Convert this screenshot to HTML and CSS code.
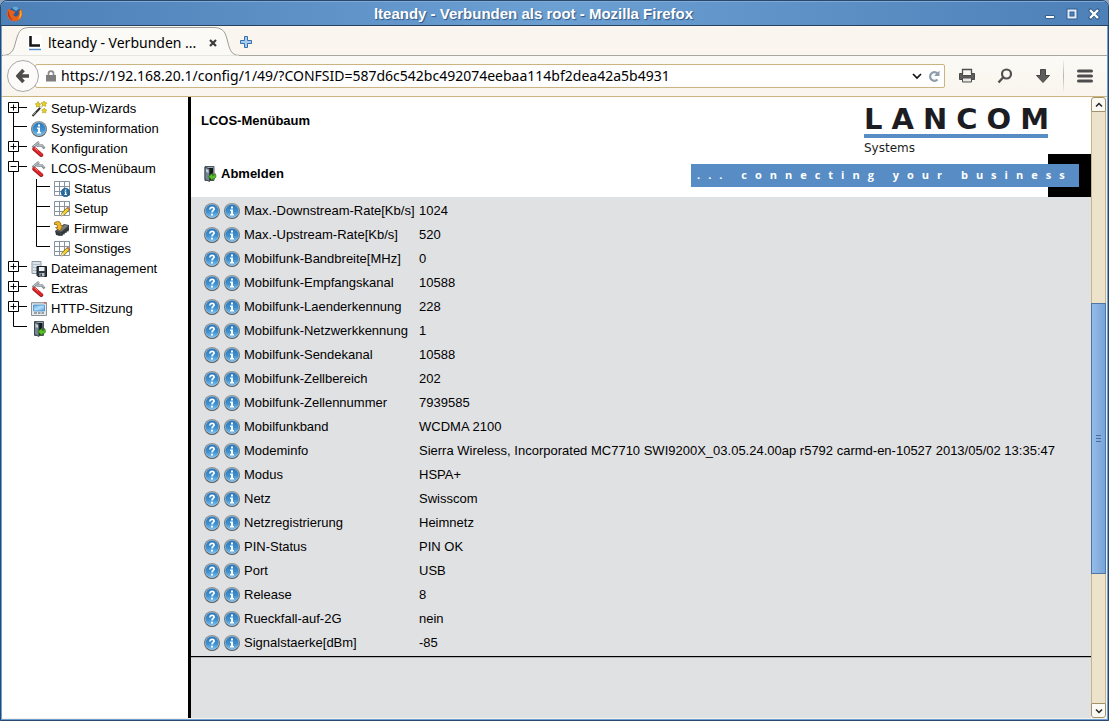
FILE: index.html
```
<!DOCTYPE html>
<html lang="de">
<head>
<meta charset="utf-8">
<title>lteandy - Verbunden als root</title>
<link rel="stylesheet" href="styles.css">
</head>
<body>
<svg class="defs" aria-hidden="true">
  <defs>
    <linearGradient id="blue" x1="0" y1="0" x2="0" y2="1"><stop offset="0" stop-color="#2f78b8"/><stop offset="0.55" stop-color="#3d8fd0"/><stop offset="1" stop-color="#7cc4ee"/></linearGradient>
    <linearGradient id="ring" x1="0" y1="0" x2="0" y2="1"><stop offset="0" stop-color="#8b979f"/><stop offset="1" stop-color="#4b545a"/></linearGradient>
    <linearGradient id="screen" x1="0" y1="0" x2="1" y2="1"><stop offset="0" stop-color="#4fa8e8"/><stop offset="0.5" stop-color="#b4defa"/><stop offset="1" stop-color="#4fa0e0"/></linearGradient>
    <symbol id="orb" viewBox="0 0 16 16"><circle cx="8" cy="8" r="8" fill="url(#ring)"/><circle cx="8" cy="8" r="7" fill="#a9bcc8"/><circle cx="8" cy="8" r="6.500" fill="url(#blue)"/></symbol>
    <symbol id="info" viewBox="0 0 16 16"><use href="#orb"/><path d="M7 3.500h2v2H7zM6 6.500h3v4.500h1v1.500H6V11h1V8H6z" fill="#fff"/></symbol>
    <symbol id="help" viewBox="0 0 16 16"><use href="#orb"/><path d="M6 6.500C5.800 3.700 10.300 3.700 10.100 6C10 7.300 8.100 7.500 8 9.500" fill="none" stroke="#fff" stroke-width="1.700"/><path d="M7 10.700h2v1.800H7z" fill="#fff"/></symbol>
    <symbol id="wand" viewBox="0 0 16 16"><path d="M1.500 15L10 6" stroke="#333" stroke-width="2"/><path d="M2 14L5 11" stroke="#8c9499" stroke-width="1"/><path d="M9 7l2-2" stroke="#ddd" stroke-width="2"/><g fill="#e9d31d" stroke="#a8951a" stroke-width=".6"><path d="M7 .5l1 2 1.800.4-1.300 1.300.2 2-1.700-.9-1.700.9.2-2L4.200 2.900 6 2.500z"/><path d="M13 0l1 1.600 1.800.3-1.200 1.500.2 1.900-1.800-.8-1.700.8.1-1.900-1.200-1.500 1.800-.3z"/><path d="M13.300 7l.9 1.500 1.600.5-1.100 1.200.1 1.800-1.500-.7-1.600.7.1-1.800-1.100-1.200 1.600-.5z"/></g></symbol>
    <symbol id="knife" viewBox="0 0 16 16"><path d="M1.500 6.500L8 1M5.500 4.500H11L13.500 7.500" fill="none" stroke="#7d868e" stroke-width="2.600"/><path d="M2.500 5.300L8 1M5.500 4.200H11L13 6.500" fill="none" stroke="#cdd3d8" stroke-width="1"/><path d="M3.300 8L10.200 14" stroke="#9a1a1d" stroke-width="4" stroke-linecap="round"/><path d="M3.300 7.500L10.200 13.500" stroke="#e0282d" stroke-width="2.800" stroke-linecap="round"/><path d="M3.800 7L6.800 9.700" stroke="#f79a8f" stroke-width=".9"/></symbol>
    <symbol id="grid" viewBox="0 0 16 16"><path d="M.5.500h15v14H.5z" fill="#fff" stroke="#8693a0"/><path d="M5.500 1v13M10.500 1v13M1 5.500h14M1 10.500h14" stroke="#8693a0"/></symbol>
    <symbol id="gridinfo" viewBox="0 0 16 16"><use href="#grid"/><circle cx="11.500" cy="11.500" r="4.300" fill="#246ba1" stroke="#134a75" stroke-width=".6"/><path d="M10.900 8.500h1.400v1.200h-1.400zM10.400 10.500h1.900v2.600h.6v.8h-2.500v-.8h.6v-1.800h-.6z" fill="#fff"/></symbol>
    <symbol id="gridedit" viewBox="0 0 16 16"><use href="#grid"/><path d="M7 15l1-3.300 5.300-5.200 2.300 2.200-5.400 5.300z" fill="#f0d32b" stroke="#6d5a14" stroke-width=".8"/><path d="M7 15l1-3.300 2.300 2.300z" fill="#f2dbbd"/><path d="M12.700 7l1-.9c.8-.8 2.900 1.300 2 2l-.8.9z" fill="#cf6d55"/></symbol>
    <symbol id="chip" viewBox="0 0 16 16"><path d="M1 10l9-7 5 1v5l-8 6-5-1z" fill="#41464b"/><path d="M3 9.500L10.500 4l4 .7L7 10.500z" fill="#777e84"/><path d="M3 11v3M5 12v3M8 11v4M10 10v3.500M12 8v4M14 6.500v4" stroke="#24282b"/><path d="M.5 1.500l3-1c3 0 3.500 2 3.300 4h2L6 10 1.500 6.500h2C3.500 4 3 3 .5 3.500z" fill="#f1b821" stroke="#7a570b" stroke-width=".7"/></symbol>
    <symbol id="files" viewBox="0 0 16 16"><path d="M1 .5h9v12H1z" fill="#dbe3ea" stroke="#8b97a1"/><path d="M1 3.500h9M1 6.500h9M1 9.500h5" stroke="#b2bec8"/><path d="M6 5.500h9.500v10H7L6 14.500z" fill="#303a43" stroke="#151b20"/><path d="M8 6h5.500v4H8z" fill="#eef2f5"/><path d="M8.500 12h5v3.500h-5z" fill="#bac3ca"/><path d="M9.500 12.500h1.300v2.500H9.500z" fill="#222"/></symbol>
    <symbol id="session" viewBox="0 0 16 16"><path d="M.5 1.500h15v13H.5z" fill="#e7ebee" stroke="#8b9197"/><path d="M1 2h14" stroke="#aab1b7"/><path d="M13 2h2" stroke="#d8442b"/><path d="M2.500 4h11v6h-11z" fill="url(#screen)" stroke="#4b8ec4" stroke-width=".8"/><path d="M3 12h3M7 12h2.500M10.500 12H13" stroke="#7d868d" stroke-width="1.500"/></symbol>
    <symbol id="door" viewBox="0 0 16 16"><path d="M3.500.5h9v14h-9z" fill="#9ba8b2" stroke="#4c565e"/><path d="M6 2h5.500v12H6z" fill="#15191c"/><path d="M3.500 1L8 3v12.500l-4.500-2z" fill="#738492" stroke="#333d45" stroke-width=".8"/><path d="M4.500 3l2.500 1v3l-2.500-1z" fill="#c0ced8"/><path d="M7 10.500l4-3.500v2.200c2.500.3 2.500-.7 2.500-1.700 2 3 .5 5.500-2.500 5.500V15z" fill="#58bf26" stroke="#256c0b" stroke-width=".7"/></symbol>
    <symbol id="plus" viewBox="0 0 23 20"><path d="M5.500 0v20M10 7.500h9" stroke="#000"/><path d="M.5 2.500h10v10H.5z" fill="#fff" stroke="#000"/><path d="M2.500 7.500h6M5.500 4.500v6" stroke="#000"/></symbol>
    <symbol id="plusfirst" viewBox="0 0 23 20"><path d="M5.500 8v12M10 8.500h9" stroke="#000"/><path d="M.5 3.500h10v10H.5z" fill="#fff" stroke="#000"/><path d="M2.500 8.500h6M5.500 5.500v6" stroke="#000"/></symbol>
    <symbol id="minus" viewBox="0 0 23 20"><path d="M5.500 0v20M10 7.500h9" stroke="#000"/><path d="M.5 2.500h10v10H.5z" fill="#fff" stroke="#000"/><path d="M2.500 7.500h6" stroke="#000"/></symbol>
    <symbol id="branch" viewBox="0 0 23 20"><path d="M5.500 0v20M5 7.500h14" stroke="#000"/></symbol>
    <symbol id="last" viewBox="0 0 23 20"><path d="M5.500 0v7.500h13.500" fill="none" stroke="#000"/></symbol>
    <symbol id="subbranch" viewBox="0 0 18 20"><path d="M.5 0v20M0 7.500h14" stroke="#000"/></symbol>
    <symbol id="sublast" viewBox="0 0 18 20"><path d="M.5 0v7.500h13.500" fill="none" stroke="#000"/></symbol>
  </defs>
</svg>

<div class="window">
  <header class="titlebar">
    <svg class="fox" viewBox="0 0 16 16"><circle cx="8" cy="7.500" r="6.500" fill="#285d9c"/><path d="M5 2c2-2 5-1.500 7 .5L9 5z" fill="#62abd9"/><path d="M1.500 2.500L3.500 4 6 4.500 8.500 6 7 7.500 6.500 9.500c2 2 4.500 1 5.500-1.500L11.500 4 13 5l.5-2.500c3 4 2 9-1.500 11.500s-9 1.500-11-2.500-.5-6 .5-9z" fill="#e5601c"/><path d="M13.500 3.500c2 4 1 8-2.500 10 1.500-2 2.500-5 2.500-10z" fill="#fac02e"/><path d="M1.500 4.500C0 9 2 13 6 14.500 3 12 2 9 1.500 4.500z" fill="#b52c18"/></svg>
    <h1 class="window-title">lteandy - Verbunden als root - Mozilla Firefox</h1>
    <div class="window-controls">
      <button aria-label="Minimieren"><svg viewBox="0 0 12 12"><path d="M1.500 7.500h9v3h-9z" fill="#fff" stroke="#355f8f"/></svg></button>
      <button aria-label="Maximieren"><svg viewBox="0 0 12 12"><path d="M2.500 2.500h7v7h-7z" fill="none" stroke="#355f8f" stroke-width="4"/><path d="M2.500 2.500h7v7h-7z" fill="none" stroke="#e4edf7" stroke-width="2"/></svg></button>
      <button aria-label="Schließen"><svg viewBox="0 0 12 12"><path d="M2.500 2.500l7 7M9.500 2.500l-7 7" stroke="#355f8f" stroke-width="4" stroke-linecap="square"/><path d="M2 2l8 8M10 2l-8 8" stroke="#fff" stroke-width="2.300"/></svg></button>
    </div>
  </header>

  <div class="tabs">
    <div class="tab">
      <svg class="tab-shape" viewBox="0 0 238 30"><path d="M0 29.500C12 29.500 12 21 14.500 13C17 4 20 1.500 28 1.500H211C220 1.500 223 5 225 13C227.500 22 228 29.500 238 29.500" fill="#fbfaf6" stroke="#9c9c98"/><path d="M1 30h236" stroke="#fbfaf6" stroke-width="1"/></svg>
      <svg class="favicon" viewBox="0 0 14 16"><path d="M0 0h14v16H0z" fill="#fff"/><path d="M2.500 1v9.500H12" fill="none" stroke="#15161a" stroke-width="2.600"/><path d="M1 14.500h12" stroke="#5990ca" stroke-width="1.500"/></svg>
      <span class="tab-label">lteandy - Verbunden ...</span>
      <button class="tab-close" aria-label="Tab schließen"><svg viewBox="0 0 8 8"><path d="M1 1l6 6M7 1L1 7" stroke="#3b3b3b" stroke-width="2.200"/></svg></button>
    </div>
    <button class="new-tab" aria-label="Neuer Tab"><svg viewBox="0 0 12 12"><path d="M4.500.5h3v4h4v3h-4v4h-3v-4h-4v-3h4z" fill="#a9cbee" stroke="#366fae"/></svg></button>
  </div>

  <nav class="toolbar">
    <button class="back" aria-label="Zurück"><svg viewBox="0 0 14 16"><path d="M7.500 2L2 8l5.500 6M2.500 8H13" fill="none" stroke="#4d4d4d" stroke-width="3.600"/></svg></button>
    <div class="urlbar">
      <svg class="lock" viewBox="0 0 10 12"><path d="M2.500 6V3.500c0-3.300 5-3.300 5 0V6" fill="none" stroke="#8b8b8b" stroke-width="1.700"/><path d="M0 5h10v6.500H0z" fill="#7e7e7e"/></svg>
      <input class="url" type="text" aria-label="Adresse" value="https://192.168.20.1/config/1/49/?CONFSID=587d6c542bc492074eebaa114bf2dea42a5b4931">
      <button aria-label="Verlauf"><svg viewBox="0 0 12 12"><path d="M2 4l4 4 4-4" fill="none" stroke="#111" stroke-width="1.700"/></svg></button>
      <button aria-label="Neu laden"><svg viewBox="0 0 12 12"><path d="M9.500 3.500A4.300 4.300 0 1 0 9.500 9.500" fill="none" stroke="#8e9baa" stroke-width="2.200"/><path d="M11.500.5v5.500H6z" fill="#8e9baa"/></svg></button>
    </div>
    <button class="tool" aria-label="Drucken"><svg viewBox="0 0 16 16"><path d="M3.500 6V1.500h9V6" fill="#f8f7f3" stroke="#4e4e4e" stroke-width="1.300"/><path d="M.5 5.500h3v2h9v-2h3v6h-15z" fill="#5d5d5d" stroke="#4a4a4a"/><path d="M3.500 10h9v4h-9z" fill="#e8e8e4" stroke="#4e4e4e"/></svg></button>
    <button class="tool" aria-label="Suchen"><svg viewBox="0 0 16 16"><circle cx="9.500" cy="6" r="4.500" fill="none" stroke="#505050" stroke-width="2.200"/><path d="M6.500 9L1.500 14.500" stroke="#505050" stroke-width="2.400"/></svg></button>
    <button class="tool" aria-label="Downloads"><svg viewBox="0 0 16 16"><path d="M5.500 1.500h5v6h4L8 14.500 1.500 7.500h4z" fill="#5d5d5d" stroke="#454545"/></svg></button>
    <span class="divider"></span>
    <button class="menu" aria-label="Menü"><svg viewBox="0 0 16 16"><path d="M1.500 3h13M1.500 8h13M1.500 13h13" stroke="#4d4d4d" stroke-width="3" stroke-linecap="round"/></svg></button>
  </nav>

  <div class="page">
    <nav class="sidebar">
      <ul class="tree">
        <li><div class="row"><button class="toggle" aria-label="Setup-Wizards öffnen"><svg><use href="#plusfirst"/></svg></button><a href="#"><svg><use href="#wand"/></svg>Setup-Wizards</a></div></li>
        <li><div class="row"><svg class="toggle"><use href="#branch"/></svg><a href="#"><svg><use href="#info"/></svg>Systeminformation</a></div></li>
        <li><div class="row"><button class="toggle" aria-label="Konfiguration öffnen"><svg><use href="#plus"/></svg></button><a href="#"><svg><use href="#knife"/></svg>Konfiguration</a></div></li>
        <li><div class="row"><button class="toggle" aria-label="LCOS-Menübaum schließen"><svg><use href="#minus"/></svg></button><a href="#"><svg><use href="#knife"/></svg>LCOS-Menübaum</a></div>
          <ul class="subtree">
            <li class="row"><svg class="subline"><use href="#subbranch"/></svg><a href="#"><svg><use href="#gridinfo"/></svg>Status</a></li>
            <li class="row"><svg class="subline"><use href="#subbranch"/></svg><a href="#"><svg><use href="#gridedit"/></svg>Setup</a></li>
            <li class="row"><svg class="subline"><use href="#subbranch"/></svg><a href="#"><svg><use href="#chip"/></svg>Firmware</a></li>
            <li class="row"><svg class="subline"><use href="#sublast"/></svg><a href="#"><svg><use href="#gridedit"/></svg>Sonstiges</a></li>
          </ul>
        </li>
        <li><div class="row"><button class="toggle" aria-label="Dateimanagement öffnen"><svg><use href="#plus"/></svg></button><a href="#"><svg><use href="#files"/></svg>Dateimanagement</a></div></li>
        <li><div class="row"><button class="toggle" aria-label="Extras öffnen"><svg><use href="#plus"/></svg></button><a href="#"><svg><use href="#knife"/></svg>Extras</a></div></li>
        <li><div class="row"><button class="toggle" aria-label="HTTP-Sitzung öffnen"><svg><use href="#plus"/></svg></button><a href="#"><svg><use href="#session"/></svg>HTTP-Sitzung</a></div></li>
        <li><div class="row"><svg class="toggle"><use href="#last"/></svg><a href="#"><svg><use href="#door"/></svg>Abmelden</a></div></li>
      </ul>
    </nav>

    <main class="content">
      <header class="banner">
        <div class="heading">
          <h2>LCOS-Menübaum</h2>
          <a class="logout" href="#"><svg><use href="#door"/></svg>Abmelden</a>
        </div>
        <div class="brand">
          <div class="logo">
            <div class="wordmark">LANCOM</div>
            <div class="subbrand">Systems</div>
          </div>
          <div class="corner"></div>
          <div class="slogan">... connecting your business</div>
        </div>
      </header>
      <table class="values">
        <tbody id="rows"></tbody>
      </table>
      <hr class="rule">
    </main>

    <div class="scrollbar">
      <button aria-label="Nach oben"><svg viewBox="0 0 10 10"><path d="M2 6.500l3-3 3 3" fill="none" stroke="#222" stroke-width="1.500"/></svg></button>
      <div class="track"><div class="thumb"></div></div>
      <button class="down" aria-label="Nach unten"><svg viewBox="0 0 10 10"><path d="M2 3.500l3 3 3-3" fill="none" stroke="#222" stroke-width="1.500"/></svg></button>
    </div>
  </div>
</div>
<script src="rows.js"></script>
</body>
</html>
```
FILE: styles.css
```
* { box-sizing: border-box; }
body { margin: 0; background: #8aa5c4; color: #000; font-family: "Liberation Sans", Arial, sans-serif; }
button { border: 0; padding: 0; background: none; font: inherit; display: flex; align-items: center; justify-content: center; }
svg { display: block; flex: none; }
ul { list-style: none; margin: 0; padding: 0; }
a { color: inherit; text-decoration: none; }
.defs { position: absolute; width: 0; height: 0; }

.window { display: flex; flex-direction: column; height: 100vh; border: 1px solid #2a4869; border-radius: 7px 7px 0 0; overflow: hidden; background: #6b9fd6; }

.titlebar { display: flex; align-items: center; height: 25px; padding: 0 8px 0 6px; border-top: 1px solid #7fa9d6; border-bottom: 1px solid #27425f; background: linear-gradient(90deg, #4d80b7, #6c9fd2 50%, #4d80b7); }
.fox { width: 16px; height: 16px; }
.window-title { flex: 1; margin: 0; text-align: center; font-size: 15px; line-height: 20px; color: #fff; text-shadow: 1px 1px 1px #2f5788; }
.window-controls { display: flex; gap: 10px; }
.window-controls svg { width: 12px; height: 12px; }

.tabs { display: flex; align-items: flex-end; height: 30px; margin: 0 1px; border-bottom: 1px solid #a5a5a1; background: #faf6ef; }
.tab { position: relative; display: flex; align-items: center; width: 238px; height: 30px; margin-bottom: -1px; padding: 3px 23px 0 26px; }
.tab-shape { position: absolute; inset: 0; width: 238px; height: 30px; }
.favicon { position: relative; width: 14px; height: 16px; }
.tab-label { position: relative; flex: 1; margin-left: 6px; font: 14px/20px "Noto Sans", sans-serif; white-space: nowrap; }
.tab-close { position: relative; width: 8px; height: 20px; }
.tab-close svg { width: 8px; height: 8px; }
.new-tab { width: 12px; height: 27px; }
.new-tab svg { width: 12px; height: 12px; }

.toolbar { display: flex; align-items: center; height: 41px; margin: 0 1px; padding: 0 14px 0 5px; border-bottom: 1px solid #ccb37f; background: linear-gradient(#fbfaf6, #f9f5ed); }
.back { z-index: 1; width: 32px; height: 32px; border: 1px solid #a9a9ab; border-radius: 50%; background: #fcfbf9; }
.back svg { width: 14px; height: 16px; }
.urlbar { flex: 1; display: flex; align-items: center; gap: 5px; height: 24px; margin-left: -4px; padding: 0 4px 0 10px; border: 1px solid #ccb37f; border-radius: 2px; background: #fff; }
.lock { width: 10px; height: 12px; }
.url { flex: 1; min-width: 0; height: 20px; padding: 0; border: 0; outline: 0; background: none; color: #000; font: 14px/20px "Noto Sans", sans-serif; }
.urlbar button, .urlbar button svg { width: 12px; height: 12px; }
.tool { width: 16px; margin-left: 22px; }
.urlbar + .tool { margin-left: 14px; }
.tool svg, .menu svg { width: 16px; height: 16px; }
.divider { width: 1px; height: 32px; margin: 0 13px 0 12px; background: linear-gradient(#f3f1ed, #b3b5ba, #f3f1ed); }

.page { flex: 1; min-height: 0; display: flex; margin: 0 1px 1px; border-bottom: 1px solid #f5f1e6; background: #fff; font-size: 13px; }
.sidebar { flex: none; width: 189px; padding: 2px 0 0 6px; border-right: 3px solid #000; }
.row { display: flex; align-items: flex-start; height: 20px; }
.toggle, .toggle svg { width: 23px; height: 20px; flex: none; }
.subline { width: 18px; height: 20px; }
.row a { display: flex; align-items: center; gap: 4px; height: 20px; line-height: 20px; white-space: nowrap; }
.row a svg { width: 16px; height: 16px; }
.subtree { margin-left: 5px; padding-left: 22px; border-left: 1px solid #000; }

.content { flex: 1; min-width: 0; background: #e0e1e3; }
.banner { display: flex; justify-content: space-between; height: 100px; background: #fff; }
.heading { padding: 14px 0 0 10px; }
.heading h2 { margin: 0 0 33px; font-size: 13px; line-height: 20px; }
.logout { display: flex; align-items: center; gap: 3px; font-weight: bold; line-height: 20px; }
.logout svg { width: 17px; height: 16px; }
.brand { position: relative; display: flex; width: 400px; justify-content: flex-end; }
.logo { width: 184px; padding-top: 8px; color: #1c1d22; }
.wordmark { padding-bottom: 1px; border-bottom: 4px solid #588cc5; font: bold 29px/28px "DejaVu Sans", sans-serif; letter-spacing: 9px; white-space: nowrap; }
.subbrand { font: 12px/20px "DejaVu Sans", sans-serif; }
.corner { align-self: flex-end; width: 43px; height: 43px; background: #000; }
.slogan { position: absolute; left: 0; right: 12px; bottom: 10px; padding: 0 0 2px 6px; background: #588cc5; color: #fff; font: bold 11px/21px "Open Sans", sans-serif; letter-spacing: 8px; white-space: nowrap; overflow: hidden; }

.values { margin: 2px 0 0 13px; border-collapse: collapse; }
.values td, .values th { height: 24px; padding: 0; line-height: 24px; font-weight: normal; text-align: left; white-space: nowrap; }
.values th { width: 175px; }
.values .icons { width: 40px; }
.links { display: flex; gap: 4px; }
.links svg { width: 16px; height: 16px; }
.rule { margin: 1px 0 0; border: 0; border-top: 1px solid #000; border-bottom: 1px solid #b5b5b6; }

.scrollbar { flex: none; display: flex; flex-direction: column; width: 16px; border-right: 1px solid #f7f3e8; }
.scrollbar button { width: 15px; height: 15px; border: 1px solid #a39168; border-radius: 3px 3px 0 0; background: #fbfaf5; }
.scrollbar .down { border-radius: 0 0 3px 3px; }
.scrollbar button svg { width: 10px; height: 10px; }
.track { flex: 1; display: grid; grid-template-rows: 191fr 271fr 129fr; border: 1px solid #c8b585; border-width: 0 1px; background: #ede3cb; }
.thumb { grid-row: 2; margin: 0 -1px; border: 1px solid #4d76a5; background: linear-gradient(#476c96, #476c96) 50% calc(50% - 3px) / 5px 1px no-repeat, linear-gradient(#476c96, #476c96) center / 5px 1px no-repeat, linear-gradient(#476c96, #476c96) 50% calc(50% + 3px) / 5px 1px no-repeat, linear-gradient(90deg, #95bce8, #78a4da); }
```
FILE: rows.js
```
const values = [
  ["Max.-Downstream-Rate[Kb/s]", "1024"],
  ["Max.-Upstream-Rate[Kb/s]", "520"],
  ["Mobilfunk-Bandbreite[MHz]", "0"],
  ["Mobilfunk-Empfangskanal", "10588"],
  ["Mobilfunk-Laenderkennung", "228"],
  ["Mobilfunk-Netzwerkkennung", "1"],
  ["Mobilfunk-Sendekanal", "10588"],
  ["Mobilfunk-Zellbereich", "202"],
  ["Mobilfunk-Zellennummer", "7939585"],
  ["Mobilfunkband", "WCDMA 2100"],
  ["Modeminfo", "Sierra Wireless, Incorporated MC7710 SWI9200X_03.05.24.00ap r5792 carmd-en-10527 2013/05/02 13:35:47"],
  ["Modus", "HSPA+"],
  ["Netz", "Swisscom"],
  ["Netzregistrierung", "Heimnetz"],
  ["PIN-Status", "PIN OK"],
  ["Port", "USB"],
  ["Release", "8"],
  ["Rueckfall-auf-2G", "nein"],
  ["Signalstaerke[dBm]", "-85"]
];
document.getElementById("rows").innerHTML = values.map(([name, value]) => `
  <tr>
    <td class="icons"><div class="links">
      <a href="#" aria-label="Hilfe"><svg><use href="#help"/></svg></a>
      <a href="#" aria-label="Information"><svg><use href="#info"/></svg></a>
    </div></td>
    <th scope="row">${name}</th>
    <td>${value}</td>
  </tr>`).join("");
```
